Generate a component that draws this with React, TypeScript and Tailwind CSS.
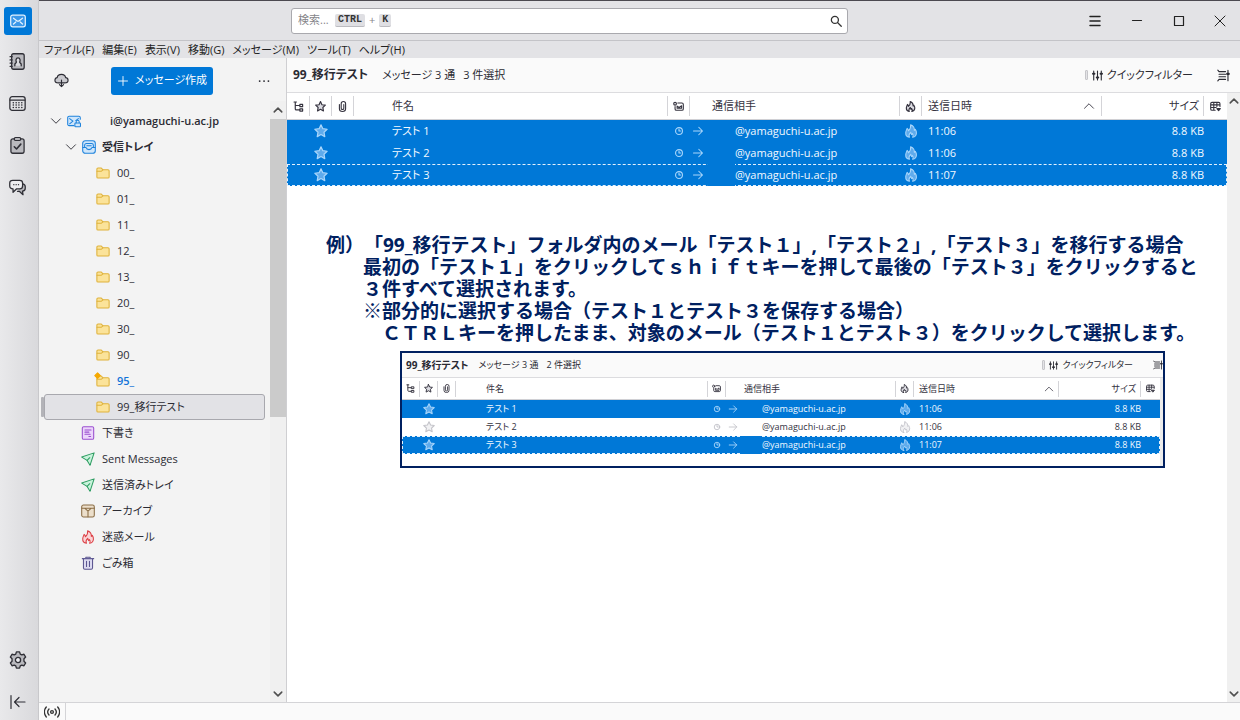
import React from "react";

type IconProps = { className?: string };

function Svg({ className = "size-4", children, sw = 1.2 }: { className?: string; children: React.ReactNode; sw?: number }) {
  return (
    <svg
      viewBox="0 0 16 16"
      className={"shrink-0 " + className}
      fill="none"
      stroke="currentColor"
      strokeWidth={sw}
      strokeLinecap="round"
      strokeLinejoin="round"
      aria-hidden="true"
    >
      {children}
    </svg>
  );
}

const MailIcon = ({ className }: IconProps) => (
  <Svg className={className}>
    <rect x="0.7" y="2.2" width="14.6" height="11.6" rx="2" fill="#3a97e8" />
    <path d="M3.500 5.200l3.300 2.500a2 2 0 0 0 2.400 0l3.300-2.500M3.500 11l2.300-2M12.500 11l-2.300-2" />
  </Svg>
);
const AddressBookIcon = ({ className }: IconProps) => (
  <Svg className={className}>
    <rect x="2.5" y="0.7" width="11.8" height="14.6" rx="1.8" fill="#b9b9be" />
    <path d="M1 3.5h2M1 6.5h2M1 9.5h2M1 12.5h2" />
    <path d="M5.500 12v-1.200c0-1.300 1.500-1.200 1.500-2.300C6.300 7.700 6.200 4.500 8.500 4.500s2.200 3.200 1.500 4c0 1.100 1.500 1 1.500 2.300V12" fill="#dcdce0" />
  </Svg>
);
const CalendarIcon = ({ className }: IconProps) => (
  <Svg className={className}>
    <rect x="0.8" y="1.600" width="14.400" height="12.800" rx="2.200" />
    <path d="M1 4.800h14" />
    <path d="M4 7.200h.1M6.700 7.200h.1M9.300 7.200h.1M12 7.200h.1M4 9.500h.1M6.700 9.500h.1M9.300 9.500h.1M12 9.500h.1M4 11.800h.1M6.700 11.800h.1M9.300 11.800h.1M12 11.800h.1" strokeWidth="1.4" />
  </Svg>
);
const TasksIcon = ({ className }: IconProps) => (
  <Svg className={className}>
    <rect x="1.800" y="1.800" width="12.400" height="13.500" rx="1.800" fill="#b9b9be" />
    <rect x="5" y="0.600" width="6" height="2.600" rx="1" fill="#e4e4e7" />
    <path d="M5 9.200l2.100 2.100 4-4.600" strokeWidth="1.500" />
  </Svg>
);
const ChatIcon = ({ className }: IconProps) => (
  <Svg className={className}>
    <path d="M13 4.500c1.500.3 2.300 1.200 2.300 2.700v1.600c0 1.700-1 2.600-2.600 2.700l.5 3.300-3.500-3.200H8" fill="#b9b9be" />
    <path d="M3.500 1.200h6.600c1.700 0 2.700 1 2.700 2.600v2.700c0 1.700-1 2.700-2.700 2.700H7.200L3.800 12.500V9.200C1.700 9.200.7 8.200.7 6.500V3.800c0-1.600 1-2.600 2.800-2.600z" fill="#ededf0" />
    <path d="M4.500 5.300h.1M6.700 5.300h.1M8.900 5.300h.1" />
  </Svg>
);
const GearIcon = ({ className }: IconProps) => (
  <Svg className={className}>
    <path d="M6.600.8h2.800l.6 2 1.300.7 2-.6 1.500 2.500-1.500 1.500v2.200l1.500 1.500-1.500 2.500-2-.6-1.300.7-.6 2H6.600l-.6-2-1.300-.7-2 .6-1.500-2.500 1.500-1.500V6.900L1.200 5.400l1.500-2.500 2 .6L6 2.800z" fill="#b9b9be" />
    <circle cx="8" cy="8" r="2.300" fill="#ececef" />
  </Svg>
);
const CollapseIcon = ({ className }: IconProps) => (
  <Svg className={className} sw={1.200}>
    <path d="M1 1.500v13M15 8H4.500M9 3.500L4.500 8 9 12.500" />
  </Svg>
);
const CloudIcon = ({ className }: IconProps) => (
  <Svg className={className}>
    <path d="M4.500 10.500C2.300 10.500 1 9.300 1 7.600c0-1.500 1-2.500 2.400-2.700C3.700 2.800 5.500 1.500 8 1.500c2.300 0 4 1.300 4.400 3.400 1.600.2 2.600 1.200 2.600 2.700 0 1.700-1.300 2.900-3.500 2.900z" fill="#c9c9ce" />
    <path d="M8 7.500v7M5.800 12.300L8 14.500l2.200-2.200" />
  </Svg>
);
const ChevronDown = ({ className, sw = 1.200 }: IconProps & { sw?: number }) => (
  <Svg className={className} sw={sw}>
    <path d="M2 5l6 6 6-6" />
  </Svg>
);
const ChevronUp = ({ className, sw = 1.200 }: IconProps & { sw?: number }) => (
  <Svg className={className} sw={sw}>
    <path d="M2 11l6-6 6 6" />
  </Svg>
);
const AccountIcon = ({ className }: IconProps) => (
  <Svg className={className}>
    <path d="M8 13.300H2.500c-1 0-1.700-.7-1.700-1.700V4.300c0-1 .7-1.700 1.700-1.700h11c1 0 1.700.7 1.700 1.700V6" fill="#cfe6fb" />
    <path d="M3 5.200l3.800 3L3 11.200M13 5.200L10 7.500" />
    <rect x="9" y="10.200" width="6.400" height="4.400" rx=".8" fill="#cfe6fb" />
    <path d="M10.500 10V8.800a1.700 1.700 0 0 1 3.400 0V10" />
  </Svg>
);
const InboxIcon = ({ className }: IconProps) => (
  <Svg className={className}>
    <rect x="0.800" y="0.800" width="14.400" height="14.400" rx="3" fill="#cfe6fb" />
    <path d="M3 8.500V6a2 2 0 0 1 2-2h6a2 2 0 0 1 2 2v2.500M1 8.500h3.500C5 10 6.200 11 8 11s3-1 3.500-2.500H15M5.500 6.500h5" />
  </Svg>
);
const FolderIcon = ({ className, fresh }: IconProps & { fresh?: boolean }) => (
  <Svg className={className}>
    <path d="M1 12.500v-9c0-.8.500-1.300 1.300-1.300h3.500l2 2h5.900c.8 0 1.300.5 1.300 1.300v7c0 .8-.5 1.300-1.300 1.300H2.300c-.8 0-1.300-.5-1.300-1.300z" fill="#fbe39a" />
    <path d="M1.200 6h5l1.600-1.600" />
    {fresh && <path d="M1.800-1.400L5 1.800 1.800 5-1.400 1.800z" fill="#f5a800" stroke="#f5a800" />}
  </Svg>
);
const DraftIcon = ({ className }: IconProps) => (
  <Svg className={className}>
    <rect x="1.500" y="0.800" width="13" height="14.400" rx="1.600" fill="#ecd5fb" />
    <path d="M4.500 4.500h7M4.500 7h4.500M4.500 9.500h6M9 12h2" />
  </Svg>
);
const SentIcon = ({ className }: IconProps) => (
  <Svg className={className}>
    <path d="M.8 5.800L15 1 10.300 15.200 7 9.600z" fill="#c9f3dc" />
    <path d="M7 9.600L10 6.500" />
  </Svg>
);
const ArchiveIcon = ({ className }: IconProps) => (
  <Svg className={className}>
    <rect x="0.800" y="1.200" width="14.400" height="13.600" rx="2" fill="#ecdfcb" />
    <path d="M1 4.800h3.200L8 8.200l3.800-3.400H15M4.200 4.800h7.600M8 8.200v6.300" />
  </Svg>
);
const FlameIcon = ({ className, fill = "#fbd3d5", sw = 1.200 }: IconProps & { fill?: string; sw?: number }) => (
  <Svg className={className} sw={sw}>
    <path d="M6.200 15.200C3.200 14.800 1.800 12.700 2 10c.1-2 1-3.300 1.600-5 .9.800 1.400 1.800 1.400 2.800C7 6 8 3.500 7.600.8c3 1.300 4.500 3.800 4.200 6.500l1.100-1.100c1.100 1.500 1.400 3 1.300 4.400-.2 2.600-1.700 4.200-4.300 4.600.9-1.500.8-3-.2-4.200l-1 1.200-1-2.700c-1.900 1.800-2.500 3.700-1.500 5.700z" fill={fill} />
  </Svg>
);
const TrashIcon = ({ className }: IconProps) => (
  <Svg className={className}>
    <path d="M1.500 3h13M5.500 3V1.500h5V3" />
    <path d="M2.800 3.200h10.400v10.300c0 1-.6 1.700-1.600 1.700H4.400c-1 0-1.600-.7-1.600-1.700z" fill="#dcdaf0" />
    <path d="M6.300 6v6M9.700 6v6" />
  </Svg>
);
const StarIcon = ({ className, fill, sw = 1.400 }: IconProps & { fill: string; sw?: number }) => (
  <Svg className={className} sw={sw}>
    <path d="M8 .9l2.100 4.500 4.900.6-3.600 3.400.9 5L8 12l-4.300 2.400.9-5L1 6l4.900-.6z" fill={fill} />
  </Svg>
);
const ThreadIcon = ({ className }: IconProps) => (
  <Svg className={className} sw={1.700}>
    <path d="M1.500 1.500H5M3.300 1.500v10c0 1 .5 1.500 1.500 1.500H9M3.500 6.500H9M10 5h4v3.200h-4zM10 11.500h4v3.200h-4z" />
  </Svg>
);
const ClipIcon = ({ className }: IconProps) => (
  <Svg className={className} sw={1.600}>
    <path d="M3.500 5v6.200a4.500 4 0 0 0 9 0V4a3.200 3.200 0 0 0-6.400 0v6.500a1.900 1.900 0 0 0 3.800 0V5" />
  </Svg>
);
const ReadIcon = ({ className }: IconProps) => (
  <Svg className={className} sw={1.600}>
    <path d="M7 3h6c1.200 0 2 .8 2 2v6.500c0 1.200-.8 2-2 2H5c-1.200 0-2-.8-2-2V8" />
    <circle cx="3" cy="4" r="2" />
    <path d="M6 10.500V7.500l3 2 3.500-2.500v3.500z" />
  </Svg>
);
const DotIcon = ({ className }: IconProps) => (
  <Svg className={className} sw={1.800}>
    <circle cx="8" cy="8" r="5.500" />
    <path d="M8 5v3h2.500" />
  </Svg>
);
const ArrowIcon = ({ className }: IconProps) => (
  <Svg className={className} sw={1.400}>
    <path d="M2 8h12M9 3l5 5-5 5" />
  </Svg>
);
const SlidersIcon = ({ className }: IconProps) => (
  <Svg className={className} sw={1.600}>
    <path d="M2.500 1.500v13M8 1.500v13M13.500 1.500v13" />
    <path d="M1.500 5.500h2M7 11h2M12.500 5.500h2" strokeWidth="3" />
  </Svg>
);
const DisplayIcon = ({ className }: IconProps) => (
  <Svg className={className} sw={1.400}>
    <path d="M1 1.500l1.500 1.700h8M1 14.500l1.500-1.700h8M2.500 6.400h8M2.500 9.600h8M13.500 1.500v13" />
    <path d="M12.500 6h2" strokeWidth="2.600" />
  </Svg>
);
const ColumnsIcon = ({ className }: IconProps) => (
  <Svg className={className} sw={1.600}>
    <path d="M7.500 13.500H3c-1.200 0-2-.8-2-2V4c0-1.200.8-2 2-2h9.500c1.200 0 2 .8 2 2v4M1 5.700h13.500M1 9.500h8M5.500 2v11.500M10 2v6" />
    <path d="M10 11h5l-2.500 3z" fill="currentColor" />
  </Svg>
);
const SearchIcon = ({ className }: IconProps) => (
  <Svg className={className} sw={1.700}>
    <circle cx="6.500" cy="6.500" r="4.700" />
    <path d="M10 10l5 5" />
  </Svg>
);
const SignalIcon = ({ className }: IconProps) => (
  <Svg className={className} sw={1.300}>
    <circle cx="8" cy="8" r="1.400" />
    <path d="M5 5a4.500 4.500 0 0 0 0 6M11 5a4.500 4.500 0 0 1 0 6M2.300 3a7.500 7.500 0 0 0 0 10M13.700 3a7.500 7.500 0 0 1 0 10" />
  </Svg>
);

const spaces = [
  { label: "アドレス帳", Icon: AddressBookIcon },
  { label: "カレンダー", Icon: CalendarIcon },
  { label: "ToDo", Icon: TasksIcon },
  { label: "チャット", Icon: ChatIcon },
];

function SpacesBar() {
  return (
    <nav className="flex w-[39px] shrink-0 flex-col border-r border-[#c8c8cb] bg-linear-to-r from-[#e9e9eb] to-[#d9d9dc] pt-[7px] text-[#2f2f36]">
      <button aria-label="メール" className="ml-1 flex h-7 w-7 items-center justify-center rounded-[3px] bg-[#0078d7] text-[#e6f4ff]">
        <MailIcon className="size-4" />
      </button>
      <div className="mt-[5px] flex flex-col">
        {spaces.map(({ label, Icon }) => (
          <button key={label} aria-label={label} className="flex h-[42px] w-[35px] items-center justify-center">
            <Icon className="size-[17px]" />
          </button>
        ))}
      </div>
      <div className="mt-auto flex flex-col gap-[3px]">
        <button aria-label="設定" className="flex h-[42px] w-[35px] items-center justify-center">
          <GearIcon className="size-[18px]" />
        </button>
        <button aria-label="折りたたむ" className="flex h-9 w-[35px] items-center justify-center">
          <CollapseIcon className="size-4" />
        </button>
      </div>
    </nav>
  );
}

const kbd = "rounded-[2px] border-b border-[#bbbbc0] bg-[#dfdfe3] px-[3px] font-['Liberation_Mono',monospace] text-[10px] leading-3 font-bold text-[#333]";

function TitleBar() {
  return (
    <header className="flex h-10 shrink-0 items-center border-b border-[#c4c4c8] bg-[#e3e3e6]">
      <div className="w-[252px] shrink-0" />
      <div className="flex h-[26px] flex-1 items-center rounded-[3px] border border-[#a9a9ae] bg-white pl-1.5 text-[11px]">
        <input aria-label="検索" placeholder="検索..." className="w-[37px] bg-transparent outline-none placeholder:text-[#85858a]" />
        <kbd className={kbd}>CTRL</kbd>
        <span className="px-1 text-[#85858a]">+</span>
        <kbd className={kbd}>K</kbd>
        <button aria-label="検索する" className="mr-[5px] ml-auto text-[#333]">
          <SearchIcon className="size-3" />
        </button>
      </div>
      <div className="flex w-[392px] shrink-0 justify-end text-[#222]">
        <button aria-label="メニュー" className="flex w-[42px] justify-center">
          <Svg className="size-4" sw={1.500}><path d="M3 3.500h10M3 8h10M3 12.500h10" /></Svg>
        </button>
        <button aria-label="最小化" className="flex w-[42px] justify-center">
          <Svg className="size-4"><path d="M3.500 7.500h9" /></Svg>
        </button>
        <button aria-label="最大化" className="flex w-[42px] justify-center">
          <Svg className="size-4"><path d="M3.500 3.500h9v9h-9z" /></Svg>
        </button>
        <button aria-label="閉じる" className="flex w-10 justify-center">
          <Svg className="size-4" sw={1}><path d="M3 3l10 10M13 3L3 13" /></Svg>
        </button>
      </div>
    </header>
  );
}

const menus = ["ファイル(F)", "編集(E)", "表示(V)", "移動(G)", "メッセージ(M)", "ツール(T)", "ヘルプ(H)"];

function MenuBar() {
  return (
    <div className="flex h-[17px] shrink-0 items-center gap-2 bg-[#e3e3e6] pl-[5px] text-[11px] leading-4 text-[#222]">
      {menus.map((m) => (
        <button key={m}>{m}</button>
      ))}
    </div>
  );
}

const subfolders = ["00_", "01_", "11_", "12_", "13_", "20_", "30_", "90_", "95_", "99_移行テスト"];

const special = [
  { name: "下書き", icon: <DraftIcon className="size-3.5 text-[#9a4fd0]" /> },
  { name: "Sent Messages", icon: <SentIcon className="size-3.5 text-[#2f9e63]" /> },
  { name: "送信済みトレイ", icon: <SentIcon className="size-3.5 text-[#2f9e63]" /> },
  { name: "アーカイブ", icon: <ArchiveIcon className="size-3.5 text-[#8a6d45]" /> },
  { name: "迷惑メール", icon: <FlameIcon className="size-3.5 text-[#dc3f45]" /> },
  { name: "ごみ箱", icon: <TrashIcon className="size-3.5 text-[#5b5590]" /> },
];

function FolderPane() {
  return (
    <aside className="flex w-[248px] shrink-0 flex-col border-r border-[#cfcfd2] bg-[#f3f3f3] text-[#2b2b33]">
      <div className="flex h-[43px] shrink-0 items-center pt-0.5">
        <button aria-label="受信" className="ml-[15px]">
          <CloudIcon className="size-[15px]" />
        </button>
        <button className="ml-[42px] flex h-7 items-center rounded-[3px] bg-[#0078d7] px-1.5 text-[11px] text-white">
          <Svg className="mr-1.5 size-3"><path d="M8 2v12M2 8h12" /></Svg>
          メッセージ作成
        </button>
        <button aria-label="その他" className="mr-[15px] ml-auto">
          <Svg className="size-3.5" sw={2}><path d="M3 8h.1M8 8h.1M13 8h.1" /></Svg>
        </button>
      </div>
      <div className="flex min-h-0 flex-1">
        <div className="flex min-w-0 flex-1 flex-col pt-[7px] pl-px text-[11px]">
          <div className="flex h-[26px] items-center pl-2.5">
            <ChevronDown className="size-3" />
            <AccountIcon className="ml-[5px] size-3.5 text-[#1f83dc]" />
            <span className="ml-[29px] font-semibold">i@yamaguchi-u.ac.jp</span>
          </div>
          <div className="flex h-[26px] items-center pl-[25px]">
            <ChevronDown className="size-3" />
            <InboxIcon className="ml-[5px] size-3.5 text-[#1f83dc]" />
            <span className="ml-1.5 font-bold">受信トレイ</span>
          </div>
          {subfolders.map((name) => {
            const fresh = name === "95_";
            if (name.startsWith("99_")) {
              return (
                <div key={name} className="flex h-[26px] items-center pl-px">
                  <span className="h-5 w-[3px] rounded-[1px] bg-[#b3b3b8]" />
                  <div className="mr-[5px] flex h-[26px] flex-1 items-center rounded-[3px] border border-[#a8a8ae] bg-[#e2e2e6] pl-[51px]">
                    <FolderIcon className="size-3.5 text-[#dfb23a]" />
                    <span className="ml-[7px]">{name}</span>
                  </div>
                </div>
              );
            }
            return (
              <div key={name} className="flex h-[26px] items-center pl-14">
                <FolderIcon fresh={fresh} className="size-3.5 overflow-visible text-[#dfb23a]" />
                <span className={fresh ? "ml-[7px] font-semibold text-[#1373d9]" : "ml-[7px]"}>{name}</span>
              </div>
            );
          })}
          {special.map(({ name, icon }) => (
            <div key={name} className="flex h-[26px] items-center pl-[41px]">
              {icon}
              <span className="ml-[7px]">{name}</span>
            </div>
          ))}
        </div>
        <div className="flex w-4 shrink-0 flex-col items-center bg-[#f0f0f0] text-[#505050]">
          <ChevronUp sw={2.500} className="my-1 size-2.5" />
          <div className="h-[298px] w-full bg-[#cbcbcb]" />
          <ChevronDown sw={2.500} className="mt-auto mb-[3px] size-2.5" />
        </div>
      </div>
    </aside>
  );
}

type Row = { subject: string; time: string; selected: boolean; current?: boolean };

const large = {
  header: "h-[35px] pl-1.5",
  title: "text-[12px]",
  info: "ml-3.5 gap-2 text-[11px]",
  filter: "gap-1 text-[11px]",
  display: "ml-6 mr-2.5 size-[13px]",
  head: "h-[27px] text-[11px]",
  tick: "h-5",
  row: "h-[22px] text-[11px]",
  cols: ["w-[23px]", "w-[22px]", "w-[22px]", "", "w-[22px]", "w-[210px]", "w-[22px]", "w-[180px]", "w-[102px]", "w-[23px]"],
  small: "size-[11px]",
  star: "size-[14px]",
  dot: "size-[10px]",
  arrow: "size-3",
  subject: "pl-[38px]",
  partner: "pl-[22px]",
  mask: "w-[27px]",
  partnerRow: "pl-0.5",
  date: "pl-1.5",
  sort: "mr-1.5 size-3",
  sizeHead: "pr-1",
};

const compact: typeof large = {
  header: "h-[25px] pl-1",
  title: "text-[10px]",
  info: "ml-2.5 gap-2 text-[9px]",
  filter: "gap-1 text-[9px]",
  display: "ml-5 size-2.5",
  head: "h-[22px] text-[9px]",
  tick: "h-4",
  row: "h-[18px] text-[9px]",
  cols: ["w-[18px]", "w-[18px]", "w-[18px]", "", "w-[18px]", "w-[170px]", "w-[18px]", "w-[145px]", "w-[82px]", "w-[19px]"],
  small: "size-[9px]",
  star: "size-3",
  dot: "size-2",
  arrow: "size-2.5",
  subject: "pl-[30px]",
  partner: "pl-[18px]",
  mask: "w-5",
  partnerRow: "pl-0.5",
  date: "pl-[5px]",
  sort: "mr-1 size-2.5",
  sizeHead: "pr-1",
};

function PaneHeader({ s, info }: { s: typeof large; info: string }) {
  return (
    <div className={"flex shrink-0 items-center border-b border-[#dcdcdf] bg-[#fafafa] text-[#2b2b33] " + s.header}>
      <h2 className={"font-bold " + s.title}>99_移行テスト</h2>
      <div className={"flex " + s.info}>
        <span>メッセージ 3 通</span>
        <span>{info}</span>
      </div>
      <button className={"ml-auto flex items-center " + s.filter}>
        <span className="h-2.5 w-[3px] rounded-[1px] border border-[#c6c6ca] bg-[#e4e4e7]" />
        <SlidersIcon className={s.small} />
        クイックフィルター
      </button>
      <button aria-label="表示オプション">
        <DisplayIcon className={s.display} />
      </button>
    </div>
  );
}

function MessageTable({ s, rows }: { s: typeof large; rows: Row[] }) {
  const heads = [
    <ThreadIcon className={"mx-auto " + s.small} />,
    <StarIcon sw={1.700} fill="#dcdce2" className={"mx-auto " + s.small} />,
    <ClipIcon className={"mx-auto " + s.small} />,
    <span className={s.subject}>件名</span>,
    <ReadIcon className={"mx-auto " + s.small} />,
    <span className={s.partner}>通信相手</span>,
    <FlameIcon sw={1.700} fill="#dcdce2" className={"mx-auto " + s.small} />,
    <span className={"flex items-center justify-between " + s.date}>
      送信日時
      <ChevronUp className={s.sort} />
    </span>,
    <span className={"block text-right " + s.sizeHead}>サイズ</span>,
    <ColumnsIcon className={"mx-auto " + s.small} />,
  ];
  return (
    <table className="w-full table-fixed border-separate border-spacing-0">
      <colgroup>
        {s.cols.map((c, i) => (
          <col key={i} className={c} />
        ))}
      </colgroup>
      <thead className="bg-white text-[#35333f]">
        <tr className={s.head}>
          {heads.map((h, i) => (
            <th key={i} scope="col" className="border-b border-[#d0d0d4] p-0 text-left font-normal">
              <div className={(i < 9 ? "border-r border-[#d4d4d8] " : "") + "flex flex-col justify-center " + s.tick}>{h}</div>
            </th>
          ))}
        </tr>
      </thead>
      <tbody>
        {rows.map((r) => {
          const iconFill = r.selected ? "#5fabec" : "#f1f1f3";
          const iconColor = r.selected ? "text-[#a9d6fb]" : "text-[#c2c2c8]";
          return (
            <tr
              key={r.subject}
              className={
                s.row +
                (r.selected ? " bg-[#0078d7] text-[#f2f9ff]" : " text-[#35333f]") +
                (r.current ? " outline-1 -outline-offset-1 outline-[#e3f1fd] outline-dashed" : "")
              }
            >
              <td className="p-0" />
              <td className="p-0">
                <StarIcon fill={iconFill} className={"mx-auto " + s.star + " " + iconColor} />
              </td>
              <td className="p-0" />
              <td className={"p-0 " + s.subject}>{r.subject}</td>
              <td className="p-0">
                <DotIcon className={"mx-auto " + s.dot + " " + iconColor} />
              </td>
              <td className={"p-0 " + s.partnerRow}>
                <div className={"flex items-center " + s.row}>
                  <ArrowIcon className={s.arrow + " " + iconColor} />
                  <span className={"relative z-10 ml-1 shrink-0 self-stretch " + s.mask + (r.current ? " bg-[#0078d7]" : "")} />
                  <span>@yamaguchi-u.ac.jp</span>
                </div>
              </td>
              <td className="p-0">
                <FlameIcon fill={iconFill} className={"mx-auto " + s.star + " " + iconColor} />
              </td>
              <td className={"p-0 " + s.date}>{r.time}</td>
              <td className="p-0 text-right">8.8 KB</td>
              <td className="p-0" />
            </tr>
          );
        })}
      </tbody>
    </table>
  );
}

const allSelected: Row[] = [
  { subject: "テスト 1", time: "11:06", selected: true },
  { subject: "テスト 2", time: "11:06", selected: true },
  { subject: "テスト 3", time: "11:07", selected: true, current: true },
];
const twoSelected: Row[] = allSelected.map((r, i) => (i === 1 ? { ...r, selected: false } : r));

function Note() {
  return (
    <div className="pt-12 pl-[39px] font-['Open_Sans','Noto_Sans_CJK_JP',sans-serif] text-[19px] leading-[22px] font-bold whitespace-nowrap text-[#002060] [font-feature-settings:normal] [text-spacing-trim:space-all]">
      <p>例）「99_移行テスト」フォルダ内のメール「テスト１」,「テスト２」,「テスト３」を移行する場合</p>
      <div className="pl-[37px]">
        <p>最初の「テスト１」をクリックしてｓｈｉｆｔキーを押して最後の「テスト３」をクリックすると</p>
        <p>３件すべて選択されます。</p>
        <p>※部分的に選択する場合（テスト１とテスト３を保存する場合）</p>
        <p className="pl-[1em]">ＣＴＲＬキーを押したまま、対象のメール（テスト１とテスト３）をクリックして選択します。</p>
      </div>
    </div>
  );
}

function MessagePane() {
  return (
    <main className="flex min-w-0 flex-1 flex-col bg-white">
      <PaneHeader s={large} info="3 件選択" />
      <div className="flex min-h-0 flex-1">
        <div className="min-w-0 flex-1 overflow-hidden">
          <MessageTable s={large} rows={allSelected} />
          <Note />
          <section className="mt-[7px] mr-[62px] ml-[113px] border-2 border-[#002060] bg-white">
            <PaneHeader s={compact} info="2 件選択" />
            <div className="flex">
              <div className="min-w-0 flex-1 pb-3">
                <MessageTable s={compact} rows={twoSelected} />
              </div>
              <div className="w-[3px] bg-[#ececec]" />
            </div>
          </section>
        </div>
        <div className="flex w-[13px] shrink-0 flex-col items-center bg-[#f0f0f0] text-[#505050]">
          <ChevronUp sw={2.500} className="mt-[3px] size-2.5" />
          <ChevronDown sw={2.500} className="mt-auto mb-[3px] size-2.5" />
        </div>
      </div>
    </main>
  );
}

export default function App() {
  return (
    <div className="flex h-screen overflow-hidden font-['Open_Sans','Noto_Sans_CJK_JP',sans-serif] [font-feature-settings:'palt']">
      <SpacesBar />
      <div className="flex min-w-0 flex-1 flex-col border-t border-[#4b4950]">
        <TitleBar />
        <MenuBar />
        <div className="flex min-h-0 flex-1">
          <FolderPane />
          <MessagePane />
        </div>
        <footer className="flex h-[18px] shrink-0 items-center border-t border-[#d4d4d7] bg-[#fafafa]">
          <button aria-label="オンライン状態" className="flex h-full w-[27px] items-center justify-center border-r border-[#d4d4d7] text-[#333]">
            <SignalIcon className="size-4" />
          </button>
        </footer>
      </div>
    </div>
  );
}
